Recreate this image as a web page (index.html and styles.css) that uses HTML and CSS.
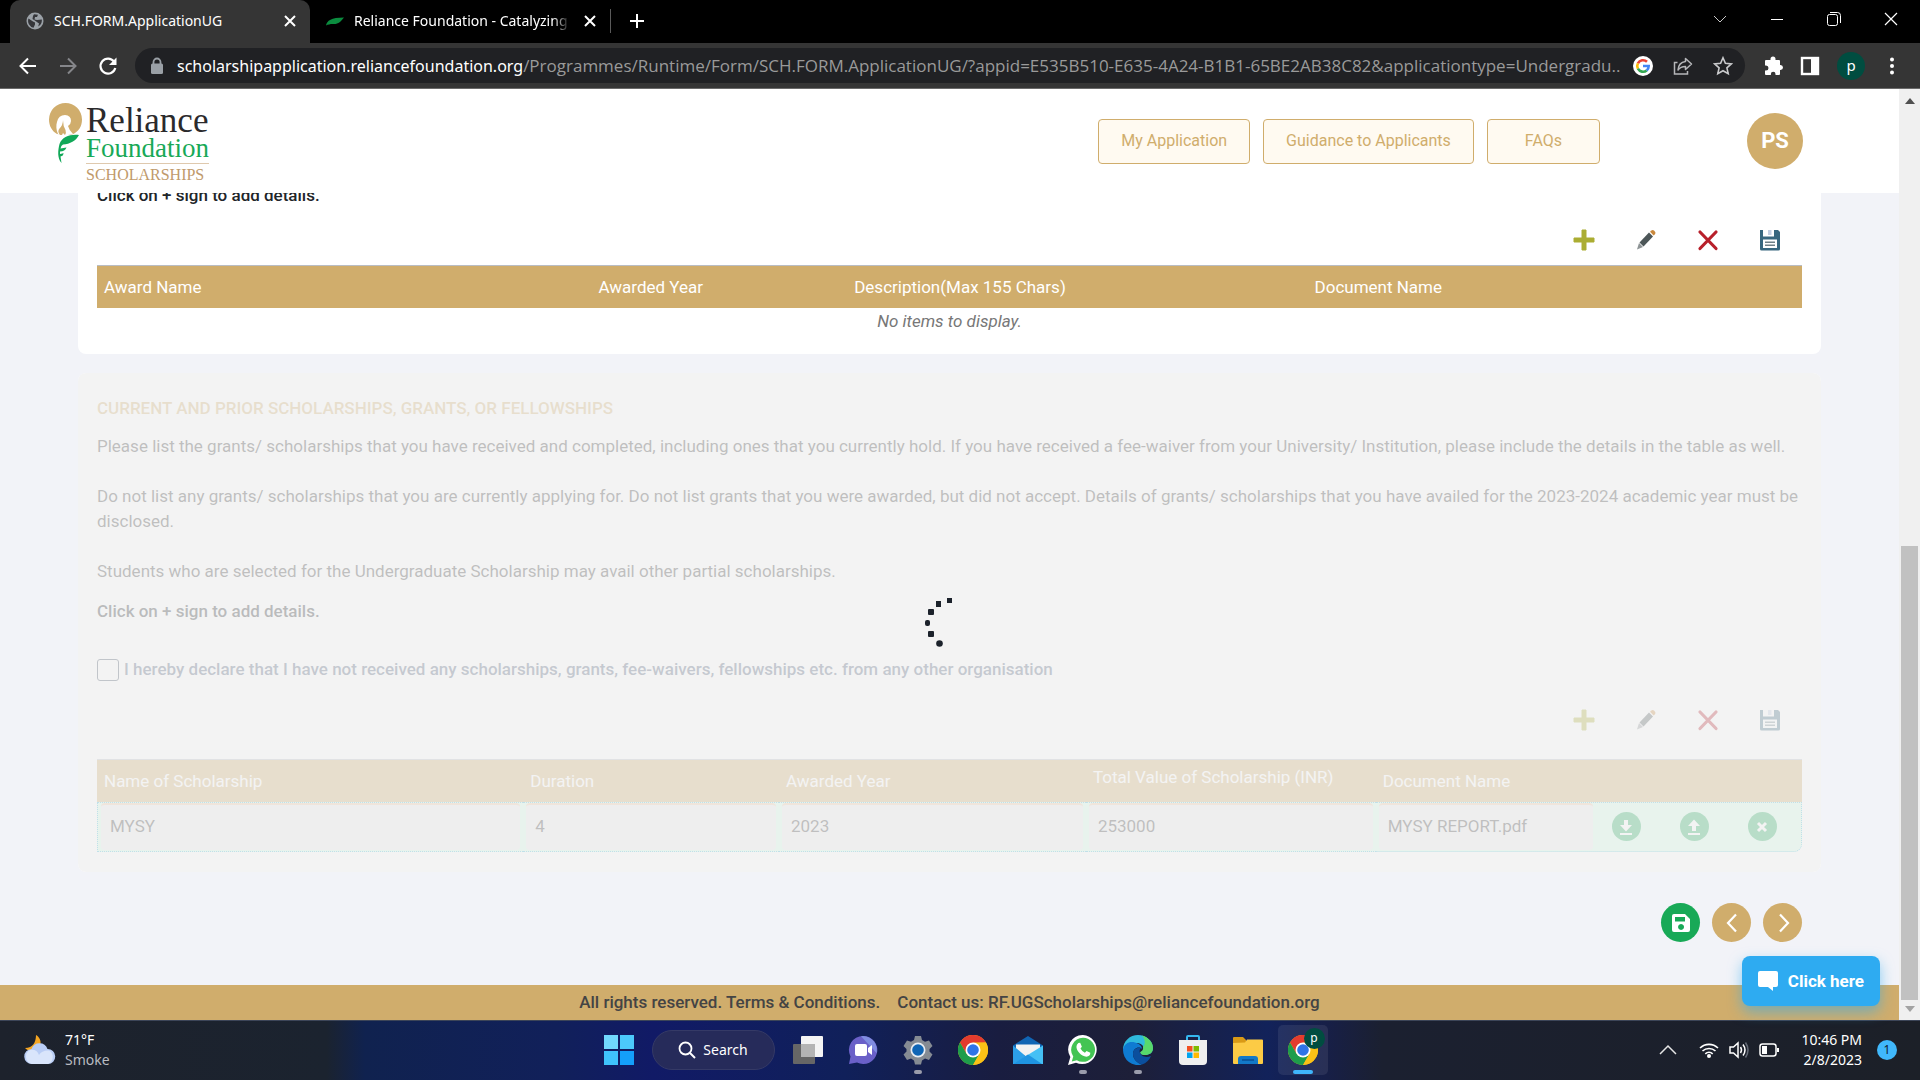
FILE: index.html
```html
<!DOCTYPE html>
<html lang="en">
<head>
<meta charset="utf-8">
<title>SCH.FORM.ApplicationUG</title>
<link rel="stylesheet" href="styles.css">
</head>
<body>
<svg class="defs" aria-hidden="true">
  <symbol id="i-x" viewBox="0 0 16 16"><path d="M3 3l10 10M13 3L3 13" fill="none" stroke="currentColor" stroke-width="2"/></symbol>
  <symbol id="i-add" viewBox="0 0 22 22"><path d="M9 1h4v8h8v4h-8v8H9v-8H1V9h8z" fill="#abad32" stroke="#abad32" stroke-width="1" stroke-linejoin="round"/></symbol>
  <symbol id="i-edit" viewBox="0 0 22 22"><path d="M14 3.500l4 4-9.500 10-4-4z" fill="#4c5658"/><path d="M4 14l4 4-6 2.500z" fill="#8d9395"/><path d="M15 2.700l1.500-1.300q1.500-.8 3 .7t.7 3L18.700 6.600z" fill="#c9883c"/></symbol>
  <symbol id="i-del" viewBox="0 0 22 22"><path d="M3 3l16 16.500M19 3L3 19.500" fill="none" stroke="#b8202b" stroke-width="3.200" stroke-linecap="round"/></symbol>
  <symbol id="i-disk" viewBox="0 0 22 22"><path d="M1 1h18l2 2v17q0 1.500-1.500 1.500h-17Q1 21.500 1 20z" fill="#38677f"/><path d="M4 1h11v6.500H4z" fill="#fff"/><path d="M9 1h3.500v5H9z" fill="#c3cfe2"/><path d="M4 10.500h14V19H4z" fill="#fff"/><path d="M6 13.300h10M6 16.300h10" stroke="#6f8088" stroke-width="1.400"/></symbol>
  <symbol id="i-chrome" viewBox="0 0 30 30"><circle cx="15" cy="15" r="15" fill="#fbc116"/><path d="M2 7.500A15 15 0 0 1 28 7.500L15 8 8.500 18.700z" fill="#e33b2e"/><path d="M2 7.500A15 15 0 0 0 15 30l6.500-11.200H8.500z" fill="#1e9d4b"/><path d="M15 7.500h13A15 15 0 0 1 15 30l6.500-11.300z" fill="#fbc116"/><circle cx="15" cy="15" r="7.500" fill="#fff"/><circle cx="15" cy="15" r="5.800" fill="#2f74e8"/></symbol>
</svg>

<header class="browser">
  <div class="tabs">
    <div class="tab tab-active">
      <svg width="18" height="18" viewBox="0 0 18 18"><circle cx="9" cy="9" r="8.500" fill="#9ba1a7"/><path d="M2.500 6.500L7 9.500l2 1v2l-1.500 3.200A7 7 0 0 1 2.500 6.500zM8 2.200l4 .5-1 2.300H9L8.500 7.500 11 8l4.800-.5a7 7 0 0 1-3.600 7L13 11.500 9.500 9 6.500 7 7 4z" fill="#35363a"/></svg>
      <span class="tab-title">SCH.FORM.ApplicationUG</span>
      <button class="icon-btn" aria-label="Close tab"><svg width="16" height="16"><use href="#i-x"/></svg></button>
    </div>
    <div class="tab">
      <svg width="18" height="18" viewBox="0 0 18 18"><path d="M0 13.500C1 8.500 5 5.500 18 5.500c-3 4-6 7-11 6.500-3 0-5 .5-7 1.500z" fill="#0b8c3f"/></svg>
      <span class="tab-title tab-fade">Reliance Foundation - Catalyzing</span>
      <button class="icon-btn" aria-label="Close tab"><svg width="16" height="16"><use href="#i-x"/></svg></button>
    </div>
    <button class="icon-btn new-tab" aria-label="New tab"><svg width="16" height="16" viewBox="0 0 16 16"><path d="M8 1v14M1 8h14" stroke="#fff" stroke-width="2"/></svg></button>
    <div class="window-controls">
      <button class="icon-btn" aria-label="Search tabs"><svg width="14" height="14" viewBox="0 0 14 14"><path d="M1 4l6 6 6-6" fill="none" stroke="#c8c8c8"/></svg></button>
      <button class="icon-btn" aria-label="Minimise"><svg width="14" height="14" viewBox="0 0 14 14"><path d="M1 7.500h12" stroke="#fff"/></svg></button>
      <button class="icon-btn" aria-label="Restore"><svg width="14" height="14" viewBox="0 0 14 14"><rect x=".5" y="2.500" width="10" height="11" rx="2" fill="none" stroke="#fff"/><path d="M3 .5h7.500q3 0 3 3V11" fill="none" stroke="#fff"/></svg></button>
      <button class="icon-btn" aria-label="Close"><svg width="14" height="14" viewBox="0 0 14 14"><path d="M1 1l12 12M13 1L1 13" stroke="#fff" stroke-width="1.200"/></svg></button>
    </div>
  </div>
  <div class="toolbar">
    <div class="nav-buttons">
      <button class="icon-btn" aria-label="Back"><svg width="20" height="20" viewBox="0 0 20 20"><path d="M18 10H3M10 2.500L2.500 10l7.500 7.500" fill="none" stroke="#fff" stroke-width="2"/></svg></button>
      <button class="icon-btn" aria-label="Forward"><svg width="20" height="20" viewBox="0 0 20 20"><path d="M2 10h15M10 2.500l7.500 7.500-7.500 7.500" fill="none" stroke="#85868a" stroke-width="2"/></svg></button>
      <button class="icon-btn" aria-label="Reload"><svg width="20" height="20" viewBox="0 0 20 20"><path d="M16 5.500A7.500 7.500 0 1 0 17.300 12" fill="none" stroke="#fff" stroke-width="2.200"/><path d="M18.500 1.500v7.500H11z" fill="#fff"/></svg></button>
    </div>
    <div class="address">
      <svg width="14" height="18" viewBox="0 0 14 18"><path d="M3.500 8V5a3.500 3.500 0 0 1 7 0v3" fill="none" stroke="#9aa0a6" stroke-width="1.800"/><rect x="1" y="6.500" width="12" height="10.500" rx="1.500" fill="#9aa0a6"/></svg>
      <div class="url"><span class="url-host">scholarshipapplication.reliancefoundation.org</span>/Programmes/Runtime/Form/SCH.FORM.ApplicationUG/?appid=E535B510-E635-4A24-B1B1-65BE2AB38C82&amp;applicationtype=Undergradu...</div>
      <div class="address-tools">
        <svg width="20" height="20" viewBox="0 0 20 20"><circle cx="10" cy="10" r="10" fill="#fff"/><g fill="none" stroke-width="2.600"><path d="M14 5.800A5.800 5.800 0 0 0 4.900 7.300" stroke="#ea4335"/><path d="M4.900 7.300a5.800 5.800 0 0 0 0 5.400" stroke="#fbbc05"/><path d="M4.900 12.700a5.800 5.800 0 0 0 8.800 1.700" stroke="#34a853"/><path d="M13.700 14.400A5.800 5.800 0 0 0 15.700 10H10" stroke="#4285f4"/></g></svg>
        <svg width="20" height="20" viewBox="0 0 20 20"><path d="M4.500 6.500h-3v11.500h13V15" fill="none" stroke="#b5b6b9" stroke-width="1.500"/><path d="M12.500 2.500l6 5.500-6 5.500v-3q-5 0-7.500 3.500.5-7.500 7.500-8.500z" fill="none" stroke="#b5b6b9" stroke-width="1.500" stroke-linejoin="round"/></svg>
        <svg width="20" height="20" viewBox="0 0 20 20"><path d="M10 1.800l2.400 5.500 6 .6-4.500 4 1.300 5.800L10 14.700l-5.200 3 1.300-5.800-4.500-4 6-.6z" fill="none" stroke="#c9cacc" stroke-width="1.600"/></svg>
      </div>
    </div>
    <div class="toolbar-end">
      <svg width="20" height="20" viewBox="0 0 20 20"><path d="M7.500 4V3a2.500 2.500 0 0 1 5 0v1H16q1 0 1 1v4h.5a2.500 2.500 0 0 1 0 5H17v4q0 1-1 1h-3.500v-1a2.300 2.300 0 0 0-4.600 0v1H3q-1 0-1-1v-3.600h1a2.500 2.500 0 0 0 0-5H2V5q0-1 1-1z" fill="#fff"/></svg>
      <svg width="20" height="20" viewBox="0 0 20 20"><rect x="2" y="2" width="16" height="16" fill="none" stroke="#fff" stroke-width="2.400"/><path d="M11 2h7v16h-7z" fill="#fff"/></svg>
      <span class="profile">p</span>
      <svg width="20" height="20" viewBox="0 0 20 20"><g fill="#fff"><circle cx="10" cy="3.500" r="2"/><circle cx="10" cy="10" r="2"/><circle cx="10" cy="16.500" r="2"/></g></svg>
    </div>
  </div>
</header>

<div class="viewport">
  <div class="page">
    <header class="site-header">
      <a class="logo" href="#" aria-label="Reliance Foundation Scholarships">
        <svg width="35" height="62" viewBox="0 0 35 62"><path d="M17.500 0A16.500 16.500 0 0 1 34 16.500c0 7-3.500 12.500-10 15l-5 .5-10-1C4 28 1 23 1 16.500A16.500 16.500 0 0 1 17.500 0z" fill="#d0ad6c"/><path d="M10 31C8 27 8 22 9 19q1.500-7 8-7 6 .5 6 6 0 3-3 5 1 4 5 8l-5 1-5 1z" fill="#fff"/><path d="M15 17q0 5-3.500 8.500-2.500 3 .5 6.500h2l1-2 2 2q1.500-2 .5-5-2.500-4-2.500-10z" fill="#d0ad6c"/><path d="M31 32c-3 6-9 9-16 9.500q-2 1-2.500 4l6-1q-1.500 4-6.500 4v2.500q3-.5 3.500-1 0 3-3 3.500l1 6.500C9 55 10 47 11.500 41 14 34 22 31 31 32z" fill="#11a858"/></svg>
        <span class="logo-text"><span class="logo-name">Reliance</span><span class="logo-sub">Foundation</span><span class="logo-prog">SCHOLARSHIPS</span></span>
      </a>
      <nav class="site-nav">
        <button class="nav-btn">My Application</button>
        <button class="nav-btn">Guidance to Applicants</button>
        <button class="nav-btn nav-btn-wide">FAQs</button>
      </nav>
      <span class="avatar">PS</span>
    </header>

    <main class="content">
      <section class="card card-awards">
        <p class="hint">Click on + sign to add details.</p>
        <div class="grid-tools">
          <button class="icon-btn" aria-label="Add"><svg width="22" height="22"><use href="#i-add"/></svg></button>
          <button class="icon-btn" aria-label="Edit"><svg width="22" height="22"><use href="#i-edit"/></svg></button>
          <button class="icon-btn" aria-label="Delete"><svg width="22" height="22"><use href="#i-del"/></svg></button>
          <button class="icon-btn" aria-label="Save"><svg width="22" height="22"><use href="#i-disk"/></svg></button>
        </div>
        <table class="grid">
          <colgroup><col class="w29"><col class="w15"><col class="w27"><col class="w29"></colgroup>
          <thead><tr><th>Award Name</th><th>Awarded Year</th><th>Description(Max 155 Chars)</th><th>Document Name</th></tr></thead>
          <tbody><tr><td class="empty" colspan="4">No items to display.</td></tr></tbody>
        </table>
      </section>

      <section class="card card-grants">
        <h2>CURRENT AND PRIOR SCHOLARSHIPS, GRANTS, OR FELLOWSHIPS</h2>
        <div class="copy">
          <p>Please list the grants/ scholarships that you have received and completed, including ones that you currently hold. If you have received a fee-waiver from your University/ Institution, please include the details in the table as well.</p>
          <p>Do not list any grants/ scholarships that you are currently applying for. Do not list grants that you were awarded, but did not accept. Details of grants/ scholarships that you have availed for the 2023-2024 academic year must be disclosed.</p>
          <p>Students who are selected for the Undergraduate Scholarship may avail other partial scholarships.</p>
        </div>
        <p class="hint">Click on + sign to add details.</p>
        <label class="declare"><input type="checkbox"> I hereby declare that I have not received any scholarships, grants, fee-waivers, fellowships etc. from any other organisation</label>
        <div class="grid-tools grid-tools-low">
          <button class="icon-btn" aria-label="Add"><svg width="22" height="22"><use href="#i-add"/></svg></button>
          <button class="icon-btn" aria-label="Edit"><svg width="22" height="22"><use href="#i-edit"/></svg></button>
          <button class="icon-btn" aria-label="Delete"><svg width="22" height="22"><use href="#i-del"/></svg></button>
          <button class="icon-btn" aria-label="Save"><svg width="22" height="22"><use href="#i-disk"/></svg></button>
        </div>
        <table class="grid">
          <colgroup><col class="w25"><col class="w15"><col class="w18"><col class="w17"><col class="w25"></colgroup>
          <thead><tr><th>Name of Scholarship</th><th>Duration</th><th>Awarded Year</th><th class="th-raised">Total Value of Scholarship (INR)</th><th>Document Name</th></tr></thead>
          <tbody>
            <tr class="row-selected">
              <td><input type="text" aria-label="Name of Scholarship" value="MYSY" readonly></td>
              <td><input type="text" aria-label="Duration" value="4" readonly></td>
              <td><input type="text" aria-label="Awarded Year" value="2023" readonly></td>
              <td><input type="text" aria-label="Total Value of Scholarship" value="253000" readonly></td>
              <td><div class="file"><input type="text" aria-label="Document Name" value="MYSY REPORT.pdf" readonly>
                <div class="file-tools">
                <button class="file-btn" aria-label="Download"><svg width="14" height="16" viewBox="0 0 14 16"><path d="M5 1h4v5h4l-6 6.500L1 6h4zM1 14h12v2H1z" fill="#fff"/></svg></button>
                <button class="file-btn" aria-label="Upload"><svg width="14" height="16" viewBox="0 0 14 16"><path d="M5 12h4V7h4L7 .5 1 7h4zM1 14h12v2H1z" fill="#fff"/></svg></button>
                <button class="file-btn" aria-label="Remove"><svg width="14" height="14" viewBox="0 0 14 14"><path d="M3 3l8 8M11 3l-8 8" stroke="#fff" stroke-width="3"/></svg></button>
                </div></div></td>
            </tr>
          </tbody>
        </table>
        <div class="loading" role="status" aria-label="Loading">
          <svg width="52" height="52" viewBox="0 0 52 52"><g fill="#1c222b"><rect x="23" y="1" width="5" height="5"/><rect x="12" y="4" width="5" height="6"/><rect x="4" y="12" width="6" height="6" rx="1"/><rect x="1" y="23" width="5" height="6" rx="2"/><rect x="4" y="34" width="6" height="6" rx="1"/><circle cx="15.500" cy="46.500" r="3.300"/></g></svg>
        </div>
      </section>

      <div class="page-actions">
        <button class="round-btn round-green" aria-label="Save form"><svg width="20" height="20" viewBox="0 0 20 20"><path d="M3 1h11l5 5v11q0 2-2 2H3q-2 0-2-2V3q0-2 2-2zM4 4v4.500h10V4zM10 11a3 3 0 1 0 .1 0z" fill="#fff" fill-rule="evenodd"/></svg></button>
        <button class="round-btn" aria-label="Previous"><svg width="20" height="20" viewBox="0 0 20 20"><path d="M14 1.500L6 10l8 8.500" fill="none" stroke="#fff" stroke-width="2.200"/></svg></button>
        <button class="round-btn" aria-label="Next"><svg width="20" height="20" viewBox="0 0 20 20"><path d="M7 1.500l8 8.500-8 8.500" fill="none" stroke="#fff" stroke-width="2.200"/></svg></button>
      </div>
    </main>

    <footer class="site-footer"><span>All rights reserved. Terms &amp; Conditions.</span><span>Contact us: RF.UGScholarships@reliancefoundation.org</span></footer>
    <button class="chat-btn"><svg width="20" height="20" viewBox="0 0 20 20"><path d="M2 0h16q2 0 2 2v12q0 2-2 2h-3v4l-5-4H2q-2 0-2-2V2q0-2 2-2z" fill="#fff"/></svg>Click here</button>
  </div>
  <div class="scrollbar" aria-hidden="true">
    <svg width="10" height="6" viewBox="0 0 10 6"><path d="M0 6l5-6 5 6z" fill="#505050"/></svg>
    <div class="track"><div class="thumb"></div></div>
    <svg width="10" height="6" viewBox="0 0 10 6"><path d="M0 0l5 6 5-6z" fill="#a3a3a3"/></svg>
  </div>
</div>

<footer class="taskbar">
  <div class="weather">
    <svg width="32" height="32" viewBox="0 0 32 32"><path d="M12 1c7 4 6 15-3 16-3 .5-6-1-8-3 8 0 11-6 11-13z" fill="#f5a623"/><path d="M8 30a7.500 7.500 0 0 1-.5-15 8.500 8.500 0 0 1 16 0A7.500 7.500 0 0 1 24 30z" fill="#b9cdf5"/><path d="M8 30a7.500 7.500 0 0 1-2-14q7-1 9 5 3-5 10-4.500A7.500 7.500 0 0 1 24 30z" fill="#d9e5fb"/></svg>
    <div class="weather-text"><span>71°F</span><span class="dim">Smoke</span></div>
  </div>
  <div class="apps">
    <button class="app" aria-label="Start"><svg width="30" height="30" viewBox="0 0 30 30"><path d="M0 0h14v14H0z" fill="#71d8fd"/><path d="M16 0h14v14H16z" fill="#4cc9fb"/><path d="M0 16h14v14H0z" fill="#3fc3fb"/><path d="M16 16h14v14H16z" fill="#149ffa"/></svg></button>
    <button class="task-search"><svg width="18" height="18" viewBox="0 0 18 18"><circle cx="7.500" cy="7.500" r="6" fill="none" stroke="#fff" stroke-width="1.800"/><path d="M12 12l5 5" stroke="#fff" stroke-width="2"/></svg>Search</button>
    <button class="app" aria-label="Task view"><svg width="30" height="30" viewBox="0 0 30 30"><rect x="8" y="1" width="22" height="21" rx="1" fill="#f4f4f4"/><rect x="0" y="9" width="22" height="20" rx="1" fill="#666"/><path d="M8 9h14v13H8z" fill="#b4b4b4"/></svg></button>
    <button class="app" aria-label="Chat"><svg width="30" height="30" viewBox="0 0 30 30"><path d="M15 1a14 14 0 1 1-6 26.500L1 29l1.500-7.500A14 14 0 0 1 15 1z" fill="#6a60c8"/><path d="M15 1a14 14 0 0 1 13.500 17L13 1.200z" fill="#7f8de0"/><rect x="7" y="9" width="12" height="12" rx="2" fill="#fff"/><path d="M20 13l4-3v10l-4-3z" fill="#fff"/></svg></button>
    <button class="app running" aria-label="Settings"><svg width="30" height="30" viewBox="0 0 30 30"><path d="M12 1h6l1 4 3 1.700 4-1.200 3.500 5.500-3 3v2.500l3 3L26 25l-4-1.500-3 2-1 4h-6l-1-4-3-2L4 25 .5 19.500l3-3V14l-3-3L4 5.500l4 1.200L11 5z" fill="#858b93"/><circle cx="15" cy="15" r="7.500" fill="#e9edf2"/><circle cx="15" cy="15" r="5.800" fill="#0f65b5"/></svg></button>
    <button class="app" aria-label="Chrome"><svg width="30" height="30"><use href="#i-chrome"/></svg></button>
    <button class="app" aria-label="Mail"><svg width="30" height="30" viewBox="0 0 30 30"><path d="M0 10.500L15 1l15 9.500V20H0z" fill="#1065b4"/><path d="M3 9.500h24v8L15 22 3 17.500z" fill="#f2f2f2"/><path d="M0 10.500L22 29H0z" fill="#2c9fe8"/><path d="M30 10.500L0 29h30z" fill="#45c0f5"/><path d="M15 19.500L29 29H0z" fill="#1f94e2"/></svg></button>
    <button class="app running" aria-label="WhatsApp"><svg width="30" height="30" viewBox="0 0 32 32"><path d="M16 0a15.500 15.500 0 1 1-7.500 29.500L0 32l2.500-8.500A15.500 15.500 0 0 1 16 0z" fill="#fff"/><path d="M16 3a12.800 12.800 0 1 1-6.500 23.800L4 28.300l1.600-5.400A12.800 12.800 0 0 1 16 3z" fill="#43c453"/><path d="M11 8.500l2-.3 1.800 4.300-1.500 2q1.500 3 4.700 4.500l1.800-2 4 2q0 4-4.200 4.200C14 22.500 9 17 9 12.500q0-2.500 2-4z" fill="#fff"/></svg></button>
    <button class="app running" aria-label="Edge"><svg width="30" height="30" viewBox="0 0 30 30"><path d="M0 15C0 6 7 0 15 0s15 6 15 13c0 5-4 7-8 7-3 0-5-1-4.500-3l3-1q1-7-5.500-8Q4 7 0 15z" fill="#2fb9dc"/><path d="M19 .6C26 2.500 30 8 30 13c0 5-4 7-8 7-3 0-5-1-4.500-3 2-1 3-3 2.500-5 3-3 2-8-1-11.400z" fill="#58d96b"/><path d="M0 15C1 8 7 6 12 7.500c4 .8 7 3.500 7 6.500-3-3-9-1-9 5 0 5 4 9 9 10.500A15 15 0 0 1 0 15z" fill="#0f7bd2"/><path d="M10 19c0-5 4-7 8-6-2 2-2 5 1 7.500 3 2 6 1.500 9 .5a15 15 0 0 1-9 8.500C14 28 10 24 10 19z" fill="#0b4f9e"/></svg></button>
    <button class="app" aria-label="Store"><svg width="30" height="30" viewBox="0 0 30 30"><path d="M9 6V2q0-1 1-1h10q1 0 1 1v4" fill="none" stroke="#35b8f0" stroke-width="2"/><path d="M1 5h28v21q0 4-4 4H5q-4 0-4-4z" fill="#efefef"/><path d="M9 11h5.500v5.500H9z" fill="#f25022"/><path d="M15.500 11H21v5.500h-5.500z" fill="#7fba00"/><path d="M9 17.500h5.500V23H9z" fill="#00a4ef"/><path d="M15.500 17.500H21V23h-5.500z" fill="#ffb900"/></svg></button>
    <button class="app" aria-label="File Explorer"><svg width="30" height="30" viewBox="0 0 30 30"><path d="M0 3q0-1 1-1h9l3 3v5H0z" fill="#d99a16"/><path d="M0 8l12-.5 2-3h15q1 0 1 1V28q0 1-1 1H1q-1 0-1-1z" fill="#fccb45"/><path d="M5 29v-5q0-3 3-3h14q3 0 3 3v5z" fill="#1379c8"/><path d="M9 25h12" stroke="#0a4f94" stroke-width="1.500"/></svg></button>
    <button class="app app-active" aria-label="Chrome, running"><svg width="30" height="30"><use href="#i-chrome"/></svg><span class="app-badge">p</span></button>
  </div>
  <div class="tray">
    <svg width="18" height="12" viewBox="0 0 18 12"><path d="M1 10l8-8 8 8" fill="none" stroke="#e6e6e6" stroke-width="1.500"/></svg>
    <div class="tray-icons">
      <svg width="20" height="18" viewBox="0 0 20 18"><g fill="none" stroke="#fff" stroke-width="1.600"><path d="M1 7a13 13 0 0 1 18 0M3.500 10a9.500 9.500 0 0 1 13 0M6.300 12.800a5.500 5.500 0 0 1 7.400 0"/></g><circle cx="10" cy="15" r="2" fill="#fff"/></svg>
      <svg width="20" height="18" viewBox="0 0 20 18"><path d="M1 6h3.500L9 2v14l-4.500-4H1z" fill="none" stroke="#fff" stroke-width="1.500"/><path d="M11.500 6q2 3 0 6M14 3.500q4 5.500 0 11" fill="none" stroke="#fff" stroke-width="1.500"/><path d="M16.500 1.500q5 7.500 0 15" fill="none" stroke="#666c78" stroke-width="1.500"/></svg>
      <svg width="20" height="18" viewBox="0 0 20 18"><rect x="1" y="3" width="16" height="12" rx="2.500" fill="none" stroke="#fff" stroke-width="1.500"/><rect x="3" y="5" width="5" height="8" fill="#fff"/><path d="M18 7h2v4h-2z" fill="#fff"/></svg>
    </div>
    <div class="clock"><span>10:46 PM</span><span>2/8/2023</span></div>
    <span class="notice">1</span>
  </div>
</footer>
</body>
</html>
```
FILE: styles.css
```css
* { box-sizing: border-box; }

:root {
  --gold: #d0ad6c;
  --green: #18a957;
  --ui: "Noto Sans", "Open Sans", sans-serif;
}

body {
  margin: 0;
  height: 100vh;
  display: flex;
  flex-direction: column;
  overflow: hidden;
  font: 17px/25px Roboto, sans-serif;
  color: #212529;
}

p, h2 { margin: 0; }
svg { display: block; flex: none; }
.defs { position: absolute; width: 0; height: 0; }
button { font: inherit; cursor: pointer; }
.icon-btn { padding: 0; border: 0; background: none; color: #fff; display: block; flex: none; }

/* Browser frame */
.browser { flex: none; font-family: var(--ui); color: #fff; background: #000; }
.tabs { display: flex; height: 43px; padding-left: 10px; }
.tab { display: flex; align-items: center; width: 300px; padding: 0 12px 2px 14px; gap: 10px; font-size: 14px; }
.tab svg { margin-left: 2px; }
.tab-active { background: #353535; border-radius: 10px 10px 0 0; }
.tab-title { flex: 1; white-space: nowrap; overflow: hidden; }
.tab-fade { -webkit-mask-image: linear-gradient(90deg, #000 92%, transparent); mask-image: linear-gradient(90deg, #000 92%, transparent); }
.new-tab { align-self: flex-start; margin-top: 9px; height: 24px; padding-left: 18px; border-left: 1px solid #5a5a5a; }
.window-controls { margin-left: auto; display: flex; align-items: flex-start; gap: 43px; padding: 12px 22px 0 0; }
.toolbar { display: flex; align-items: center; height: 46px; padding: 0 18px; background: #353535; border-bottom: 1px solid #6a6a6a; }
.nav-buttons { display: flex; gap: 20px; width: 117px; flex: none; }
.address { flex: 1; min-width: 0; display: flex; align-items: center; gap: 13px; height: 35px; padding: 0 12px 0 15px; border-radius: 18px; background: #202124; }
.url { flex: 1; min-width: 0; font: 17px/25px "Open Sans", sans-serif; color: #9a9a9a; white-space: nowrap; overflow: hidden; }
.url-host { color: #fff; font-family: var(--ui); font-size: 16px; }
.address-tools { display: flex; gap: 20px; }
.toolbar-end { display: flex; align-items: center; gap: 17px; padding-left: 18px; }
.profile { width: 28px; height: 28px; border-radius: 50%; background: #004d40; font-size: 15px; line-height: 26px; text-align: center; }

/* Page window */
.viewport { flex: 1; min-height: 0; display: flex; }
.page { position: relative; flex: 1; min-width: 0; display: flex; flex-direction: column; background: #f2f3f8; }
.scrollbar { width: 21px; display: flex; flex-direction: column; align-items: center; padding: 9px 0 8px; gap: 6px; background: #f0f0f0; }
.track { flex: 1; width: 17px; display: flex; flex-direction: column; justify-content: flex-end; }
.thumb { height: 51%; background: #c1c1c1; }

.site-header { flex: none; display: flex; align-items: center; height: 104px; padding: 0 96px 0 48px; background: #fff; }
.logo { display: flex; gap: 3px; align-self: flex-start; padding-top: 14px; text-decoration: none; }
.logo-text { display: flex; flex-direction: column; padding-top: 2px; font-family: "Liberation Serif", serif; white-space: nowrap; }
.logo-name { font-size: 35px; line-height: 32px; color: #2b2a2c; }
.logo-sub { font-size: 27px; line-height: 22px; padding-bottom: 4px; border-bottom: 1px solid #dfc9ae; color: var(--green); }
.logo-prog { font-size: 16px; line-height: 22px; color: #c09a6b; }
.site-nav { display: flex; gap: 13px; margin-left: auto; }
.nav-btn { height: 45px; padding: 0 22px 2px; border: 1px solid var(--gold); border-radius: 4px; background: #fffaf1; color: var(--gold); font-size: 16px; }
.nav-btn-wide { padding: 0 37px 2px; }
.avatar { width: 56px; margin-left: 147px; border-radius: 50%; background: var(--gold); color: #fff; font-size: 22px; font-weight: 700; line-height: 56px; text-align: center; }

.content { flex: 1; min-height: 0; overflow: hidden; display: flex; flex-direction: column; justify-content: flex-end; padding: 0 78px; }
.card { position: relative; flex: none; padding: 23px 19px 20px; border-radius: 8px; background: #fff; }
.card-awards { margin-bottom: 19px; }
.hint { font-weight: 500; }
.grid-tools { display: flex; justify-content: flex-end; gap: 40px; padding: 21px 21px 14px 0; }
.grid-tools-low { padding-top: 27px; padding-bottom: 28px; }
.card h2 { font-size: 17px; line-height: 25px; font-weight: 500; color: var(--gold); }
.copy { display: flex; flex-direction: column; gap: 25px; padding: 13px 0 15px; color: #333; }

.grid { width: 100%; table-layout: fixed; border-collapse: separate; border-spacing: 0; }
.grid th { height: 43px; padding: 0 7px; border-top: 1px solid #b9bdc4; background: var(--gold); color: #fff; font-weight: 400; text-align: left; }
.grid .th-raised { padding-bottom: 8px; }
.grid td { padding: 0; }
.grid .empty { height: 26px; font-style: italic; color: #777; text-align: center; }
.w15 { width: 15%; }
.w17 { width: 17%; }
.w18 { width: 18%; }
.w25 { width: 25%; }
.w27 { width: 27%; }
.w29 { width: 29%; }
.row-selected td { height: 50px; padding: 0 3px 1px; background: #d4fde7; border-top: 1px dotted #37b5d8; border-bottom: 1px dotted #37b5d8; }
.row-selected td:first-child { border-left: 1px dotted #37b5d8; }
.row-selected td:last-child { border-right: 1px dotted #37b5d8; border-radius: 0 0 8px 0; }
.row-selected input { display: block; width: 100%; height: 47px; padding: 0 9px 3px; border: 0; border-top: 2px solid #f2c9a2; border-radius: 4px; background: #ebebeb; color: #333; font: 17px Roboto, sans-serif; }
.file { display: flex; align-items: center; }
.row-selected .file input { flex: 0 1 214px; min-width: 0; }
.file-tools { display: flex; flex: 1; justify-content: space-between; padding: 0 21px 0 19px; }
.file-btn { display: grid; place-items: center; width: 29px; height: 29px; padding: 0; border: 0; border-radius: 50%; background: var(--green); }

.declare { display: flex; align-items: center; gap: 5px; margin-top: 33px; font-weight: 500; color: #4a5a76; }
.declare input { appearance: none; width: 22px; height: 22px; margin: 0; border: 1px solid #3d4a60; border-radius: 3px; background: #fff; }

.loading { position: absolute; inset: 0; display: grid; place-items: center; border-radius: 8px; background: rgba(239, 239, 239, .745); }

.page-actions { flex: none; display: flex; justify-content: flex-end; gap: 12px; padding: 31px 19px 43px 0; }
.round-btn { display: grid; place-items: center; width: 39px; height: 39px; padding: 0; border: 0; border-radius: 50%; background: var(--gold); }
.round-green { background: var(--green); }

.site-footer { flex: none; display: flex; justify-content: center; align-items: center; gap: 17px; height: 35px; background: var(--gold); color: #444; font-weight: 500; }
.chat-btn { position: absolute; right: 19px; bottom: 14px; display: flex; align-items: center; gap: 10px; height: 50px; padding: 0 16px; border: 0; border-radius: 8px; background: #2eabf1; box-shadow: 0 6px 14px rgba(46, 171, 241, .55); color: #fff; font-size: 17px; font-weight: 700; }

/* Desktop taskbar */
.taskbar { flex: none; display: grid; grid-template-columns: 1fr auto 1fr; align-items: center; height: 60px; padding: 0 23px 2px 24px; border-top: 1px solid #3c4558; font: 14px/20px var(--ui); color: #fff; background: linear-gradient(90deg, #1d222c 0, #1b232f 17%, #10224f 19%, #11205a 29%, #111a66 34%, #10205a 44%, #191d40 52%, #1d1f38 59%, #12225a 66%, #171f48 69%, #1b2030 72%, #1c2028 100%); }
.weather { display: flex; align-items: center; gap: 9px; }
.weather-text, .clock { display: flex; flex-direction: column; }
.dim { color: #b8bbc0; }
.apps { display: flex; align-items: center; gap: 5px; }
.app { position: relative; display: grid; place-items: center; width: 50px; height: 50px; padding: 0; border: 0; border-radius: 5px; background: none; }
.running::after, .app-active::after { content: ""; position: absolute; bottom: 1px; left: 50%; width: 8px; height: 4px; margin-left: -4px; border-radius: 2px; background: #9a9cab; }
.app-active { background: rgba(255, 255, 255, .08); }
.app-active::after { width: 20px; margin-left: -10px; background: #3fb5fb; }
.app-badge { position: absolute; top: 3px; right: 3px; width: 21px; height: 21px; border-radius: 50%; background: #004d40; color: #fff; font: 12px/19px var(--ui); }
.task-search { display: flex; align-items: center; justify-content: center; gap: 7px; width: 123px; height: 40px; margin: 0 3px; padding: 0; border: 1px solid #353a66; border-radius: 20px; background: #262b5a; color: #fff; }
.tray { display: flex; align-items: center; justify-content: flex-end; }
.tray-icons { display: flex; gap: 10px; padding: 0 22px; }
.clock { text-align: right; }
.notice { width: 20px; margin-left: 15px; border-radius: 50%; background: #40b8fb; color: #10202c; font-size: 12px; text-align: center; }
```
